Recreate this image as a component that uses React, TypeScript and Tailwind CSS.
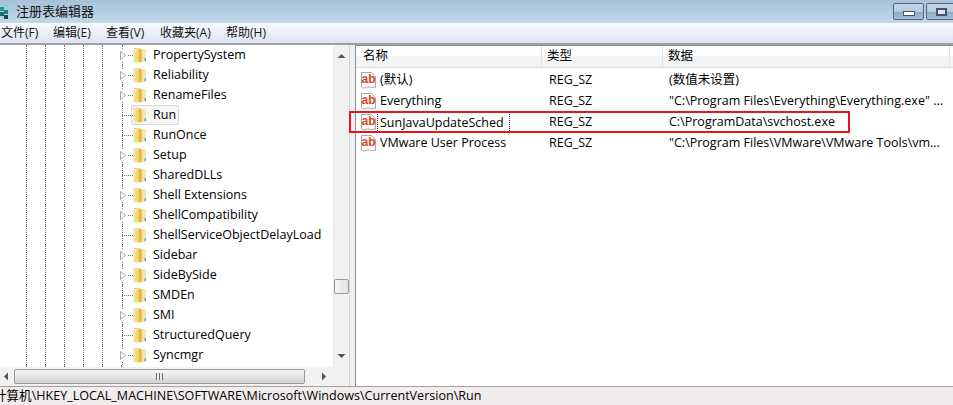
import React from 'react';

const font = "font-['Open_Sans','Noto_Sans_CJK_SC',sans-serif]";

const keys = [
  { name: 'PropertySystem', sub: true },
  { name: 'Reliability', sub: true },
  { name: 'RenameFiles', sub: true },
  { name: 'Run', sub: false, active: true },
  { name: 'RunOnce', sub: false },
  { name: 'Setup', sub: true },
  { name: 'SharedDLLs', sub: false },
  { name: 'Shell Extensions', sub: true },
  { name: 'ShellCompatibility', sub: true },
  { name: 'ShellServiceObjectDelayLoad', sub: false },
  { name: 'Sidebar', sub: true },
  { name: 'SideBySide', sub: true },
  { name: 'SMDEn', sub: false },
  { name: 'SMI', sub: true },
  { name: 'StructuredQuery', sub: false },
  { name: 'Syncmgr', sub: true },
];

const values = [
  { name: '(默认)', type: 'REG_SZ', data: '(数值未设置)' },
  { name: 'Everything', type: 'REG_SZ', data: '"C:\\Program Files\\Everything\\Everything.exe" ...' },
  { name: 'SunJavaUpdateSched', type: 'REG_SZ', data: 'C:\\ProgramData\\svchost.exe', marked: true },
  { name: 'VMware User Process', type: 'REG_SZ', data: '"C:\\Program Files\\VMware\\VMware Tools\\vm...' },
];

const menus = [
  { label: '文件(F)', w: 'w-[52px]' },
  { label: '编辑(E)', w: 'w-[53px]' },
  { label: '查看(V)', w: 'w-[54px]' },
  { label: '收藏夹(A)', w: 'w-[66px]' },
  { label: '帮助(H)', w: 'w-[50px]' },
];

const Folder = () => (
  <svg width="14" height="16" viewBox="0 0 14 16" className="shrink-0">
    <defs>
      <linearGradient id="fold" x1="0" x2="1" y1="0" y2="0">
        <stop offset="0" stopColor="#fbe88e" />
        <stop offset="0.6" stopColor="#f0cf62" />
        <stop offset="1" stopColor="#d9a93c" />
      </linearGradient>
    </defs>
    <path d="M1 1.500h6l1 1.500v12H1z" fill="#fbeeb8" stroke="#dcc278" strokeWidth="0.6" />
    <path d="M7 2.500h6V15H7z" fill="#e9cd78" />
    <path d="M1 4l7-2.500V15H1z" fill="url(#fold)" />
    <path d="M9.500 3l3.500-.5V15H9.500z" fill="#f8e9b0" />
    <rect x="11.500" y="11" width="1.500" height="3" fill="#4fa3dd" />
  </svg>
);

const Expander = () => (
  <svg width="6" height="9" viewBox="0 0 6 9" className="shrink-0">
    <path d="M.5.5l5 4-5 4z" fill="#fff" stroke="#a6a6a6" />
  </svg>
);

const TreeRow = ({ name, sub, active }: { name: string; sub: boolean; active?: boolean }) => (
  <div className="flex h-5 shrink-0 items-center">
    <div className="flex self-stretch pl-[26px]">
      {[0, 1, 2, 3, 4].map((i) => (
        <div key={i} className="w-[19px] border-l border-dotted border-[#777]" />
      ))}
    </div>
    <div className="relative flex w-[12px] shrink-0 items-center self-stretch">
      <div className="absolute left-[1px] top-0 bottom-0 border-l border-dotted border-[#777]" />
      <div className="absolute left-[1px] right-0 top-[10px] border-t border-dotted border-[#777]" />
      {sub && (
        <div className="relative ml-[-1px] bg-white py-[1px] pr-px">
          <Expander />
        </div>
      )}
    </div>
    <div
      className={
        active
          ? 'ml-[-2px] flex h-[20px] items-center rounded-[2px] border border-[#d9d9d9] bg-[#f6f6f6] pl-px'
          : 'flex h-5 items-center'
      }
    >
      <Folder />
      <span className="ml-[6px] pr-[2px] whitespace-nowrap text-[#000]">{name}</span>
    </div>
  </div>
);

const RegIcon = () => (
  <svg width="15" height="17" viewBox="0 0 15 17" className="shrink-0">
    <path d="M.5.5h10l4 4v11c-2-1.5-3 .8-5 0s-3-1-4.500 0-3 .5-4.500-.5z" fill="#fff" stroke="#a8a8a8" />
    <text x="0.500" y="11" fontSize="12" fontWeight="700" fill="#d8431c" fontFamily="'Liberation Sans', sans-serif">
      ab
    </text>
  </svg>
);

const Arrow = ({ d }: { d: string }) => (
  <svg width="9" height="9" viewBox="0 0 9 9">
    <path d={d} fill="#555" />
  </svg>
);

const WindowButton = ({ max }: { max?: boolean }) => (
  <div className="flex h-[17px] w-[31px] shrink-0 items-center justify-center rounded-[2px] border border-[#55677c] bg-[linear-gradient(#c6d8e8_0%,#b4c9dd_50%,#8ea9c3_52%,#a7bfd5_100%)]">
    {max ? (
      <div className="h-[8px] w-[11px] border-2 border-[#45566c] bg-[#dfe8f0]" />
    ) : (
      <div className="mt-[3px] h-[5px] w-[12px] border border-[#45566c] bg-white" />
    )}
  </div>
);

export default function App() {
  return (
    <div className={`${font} flex h-[405px] w-[953px] flex-col overflow-hidden bg-white text-[12.5px] leading-none text-black`}>
      {/* title bar */}
      <div className="flex h-[23px] shrink-0 items-start bg-[linear-gradient(#a6c2da,#c3d8ea)]">
        <svg width="9" height="14" viewBox="0 0 9 14" className="mt-[5px] shrink-0">
          <rect x="0" y="2" width="4" height="4" fill="#2f8f8f" />
          <rect x="4" y="0" width="4" height="4" fill="#7fd3d0" />
          <rect x="0" y="7" width="4" height="4" fill="#19696b" />
          <rect x="4" y="5" width="4" height="4" fill="#1f8084" />
          <rect x="4" y="10" width="4" height="4" fill="#0f4b50" />
        </svg>
        <span className="ml-[7px] mt-[5px] text-[13px] text-[#111]">注册表编辑器</span>
        <div className="ml-auto mr-[-4px] mt-[3px] flex gap-[2px]">
          <WindowButton />
          <WindowButton max />
        </div>
      </div>

      {/* menu bar */}
      <div className="flex h-[20px] shrink-0 items-center bg-[linear-gradient(#fbfcfe_0%,#f0f3fa_30%,#dde3f2_100%)] pl-px text-[12px]">
        {menus.map((m) => (
          <span key={m.label} className={`${m.w} whitespace-nowrap text-[#111]`}>
            {m.label}
          </span>
        ))}
      </div>
      <div className="h-[2px] shrink-0 bg-[#a0a0a0]" />

      {/* panes */}
      <div className="flex min-h-0 flex-1 bg-[#f0f0f0]">
        <div className="flex w-[350px] shrink-0 flex-col border-r border-[#d4d4d4]">
          <div className="flex min-h-0 flex-1">
            <div className="flex-1 overflow-hidden bg-white">
              {keys.map((k) => (
                <TreeRow key={k.name} {...k} />
              ))}
              <div className="flex h-3 pl-[26px]">
                {[0, 1, 2, 3, 4, 5].map((i) => (
                  <div key={i} className="w-[19px] border-l border-dotted border-[#777]" />
                ))}
              </div>
            </div>
            <div className="flex w-[16px] shrink-0 flex-col items-center border-l border-[#e8e8e8] bg-[#f1f1f1] py-[7px]">
              <Arrow d="M4.500 2l4 4h-8z" />
              <div className="mt-[218px] h-[15px] w-[15px] rounded-[2px] border border-[#9a9a9a] bg-[linear-gradient(90deg,#f6f6f6,#e2e2e2)]" />
              <div className="mt-auto">
                <Arrow d="M0.500 3h8l-4 4z" />
              </div>
            </div>
          </div>
          <div className="flex h-[19px] shrink-0 items-center bg-[#f1f1f1] pl-[2px]">
            <Arrow d="M6 .5v8l-4-4z" />
            <div className="ml-[3px] flex h-[15px] w-[291px] items-center justify-center rounded-[2px] border border-[#9a9a9a] bg-[linear-gradient(#f5f5f5,#e4e4e4_55%,#d0d0d0)]">
              <div className="h-[7px] w-[7px] bg-[repeating-linear-gradient(90deg,#666_0,#666_1px,#eee_1px,#eee_3px)]" />
            </div>
            <div className="ml-[14px]">
              <Arrow d="M3 .5v8l4-4z" />
            </div>
          </div>
        </div>

        <div className="ml-[5px] flex min-w-0 flex-1 flex-col border-l border-t border-[#8f8f8f] bg-white">
          <div className="flex h-[22px] shrink-0 items-stretch border-b border-[#e0e0e0] bg-[linear-gradient(#fff_0%,#fff_45%,#f4f5f7_50%,#f1f2f4_100%)]">
            <div className="flex w-[186px] items-center border-r border-[#e0e3e7] pl-[7px]">名称</div>
            <div className="flex w-[121px] items-center border-r border-[#e0e3e7] pl-[5px]">类型</div>
            <div className="flex w-[287px] items-center border-r border-[#e0e3e7] pl-[5px]">数据</div>
          </div>
          <div className="pt-px">
            {values.map((v, i) => (
              <div key={v.name} className={`relative flex items-center ${i === 0 ? 'mt-[1px] h-[21px]' : 'h-[21px]'}`}>
                {v.marked && <div className="absolute left-[-7px] top-[-1px] h-[22px] w-[501px] border-2 border-[#e8141f]" />}
                <div className="flex w-[187px] shrink-0 items-center pl-[5px]">
                  <RegIcon />
                  <span
                    className={
                      v.marked
                        ? 'ml-[1px] border border-y-0 border-dotted border-[#222] pl-[2px] pr-[5px] leading-[17px] whitespace-nowrap'
                        : 'ml-[4px] whitespace-nowrap'
                    }
                  >
                    {v.name}
                  </span>
                </div>
                <div className="w-[120px] shrink-0 pl-[6px] whitespace-nowrap">{v.type}</div>
                <div className="pl-[6px] whitespace-nowrap">{v.data}</div>
              </div>
            ))}
          </div>
        </div>
      </div>

      {/* status bar */}
      <div className="flex h-[19px] shrink-0 items-center overflow-hidden border-t border-[#a0a0a0] bg-[#f1eded] pt-px text-[12.56px]">
        <span className="ml-[-6px] whitespace-nowrap">计算机\HKEY_LOCAL_MACHINE\SOFTWARE\Microsoft\Windows\CurrentVersion\Run</span>
      </div>
    </div>
  );
}
